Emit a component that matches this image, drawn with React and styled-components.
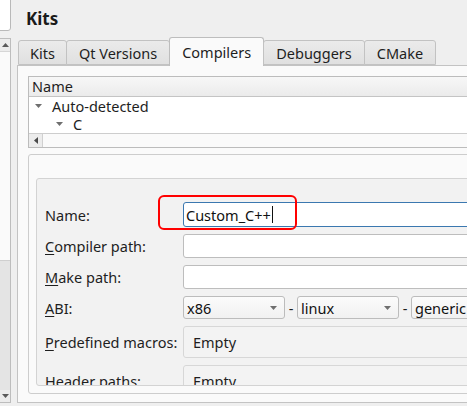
import styled, { createGlobalStyle } from 'styled-components';

const GlobalStyle = createGlobalStyle`
  html, body {
    margin: 0;
    padding: 0;
    background: #efefef;
    overflow: hidden;
  }
  body {
    font-family: "Noto Sans", "DejaVu Sans", sans-serif;
    font-size: 14.5px;
    color: #1e1e1e;
  }
`

const Triangle = ({ dir = 'down', color = '#6f6f6f', size = 7 }) => {
  const pts = {
    down: '0,0 7,0 3.5,4',
    up: '0,4 7,4 3.5,0',
    left: '4,0 4,7 0,3.5',
  }[dir]
  const w = dir === 'left' ? 4 : size
  const h = dir === 'left' ? size : 4
  return (
    <svg width={w} height={h} viewBox={dir === 'left' ? '0 0 4 7' : '0 0 7 4'}>
      <polygon points={pts} fill={color} />
    </svg>
  )
}

const tabs = ['Kits', 'Qt Versions', 'Compilers', 'Debuggers', 'CMake']

function App() {
  return (
    <>
      <GlobalStyle />
      <Window>
        <Sidebar>
          <SearchBox />
          <ListPanel>
            <VScroll>
              <ScrollBtn><Triangle dir="up" color="#5a5a5a" /></ScrollBtn>
              <VHandle />
              <VTrack />
              <ScrollBtn><Triangle dir="down" color="#5a5a5a" /></ScrollBtn>
            </VScroll>
          </ListPanel>
        </Sidebar>

        <Main>
          <Title>Kits</Title>
          <TabBar>
            {tabs.map((t) => (
              <Tab key={t} $active={t === 'Compilers'}>{t}</Tab>
            ))}
          </TabBar>
          <TabPane>
            <Tree>
              <TreeHeader>Name</TreeHeader>
              <TreeRow $depth={0}><Caret><Triangle /></Caret>Auto-detected</TreeRow>
              <TreeRow $depth={1}><Caret><Triangle /></Caret>C</TreeRow>
              <HScroll>
                <HArrow><Triangle dir="left" color="#4a4a4a" /></HArrow>
                <HHandle />
              </HScroll>
            </Tree>

            <Details>
              <FormFrame>
                <Form>
                  <FormRow>
                    <Label>Name:</Label>
                    <LineEdit $focused>
                      Custom_C++<Cursor />
                    </LineEdit>
                    <Highlight />
                  </FormRow>
                  <FormRow>
                    <Label><Mnemonic>C</Mnemonic>ompiler path:</Label>
                    <LineEdit />
                  </FormRow>
                  <FormRow>
                    <Label><Mnemonic>M</Mnemonic>ake path:</Label>
                    <LineEdit />
                  </FormRow>
                  <FormRow>
                    <Label><Mnemonic>A</Mnemonic>BI:</Label>
                    <AbiGroup>
                      <Combo>x86<Triangle /></Combo>
                      <Dash>-</Dash>
                      <Combo>linux<Triangle /></Combo>
                      <Dash>-</Dash>
                      <Combo>generic<Triangle /></Combo>
                    </AbiGroup>
                  </FormRow>
                  <FormRow>
                    <Label><Mnemonic>P</Mnemonic>redefined macros:</Label>
                    <ValueBox>Empty</ValueBox>
                  </FormRow>
                  <FormRow>
                    <Label><Mnemonic>H</Mnemonic>eader paths:</Label>
                    <ValueBox>Empty</ValueBox>
                  </FormRow>
                </Form>
              </FormFrame>
            </Details>
          </TabPane>
        </Main>
      </Window>
    </>
  )
}

const Window = styled.div`
  display: flex;
  width: 540px;
  height: 406px;
  overflow: hidden;
`

const Sidebar = styled.div`
  width: 11px;
  margin-right: 6px;
  display: flex;
  flex-direction: column;
  overflow: hidden;
  flex-shrink: 0;
`

const SearchBox = styled.div`
  box-sizing: border-box;
  margin: -4px 0 0 -30px;
  width: 41px;
  height: 35px;
  background: #ffffff;
  border: 1px solid #b9b9b9;
  border-radius: 3px;
`

const ListPanel = styled.div`
  box-sizing: border-box;
  margin: 7px 0 0 -30px;
  width: 41px;
  height: 365px;
  background: #ffffff;
  border: 1px solid #bdbdbd;
  display: flex;
  justify-content: flex-end;
`

const VScroll = styled.div`
  width: 10px;
  display: flex;
  flex-direction: column;
  background: #e6e6e6;
`

const ScrollBtn = styled.div`
  height: 12px;
  display: flex;
  align-items: center;
  justify-content: center;
  background: #ececec;
`

const VHandle = styled.div`
  height: 208px;
  background: #fafafa;
  border-top: 1px solid #d6d6d6;
  border-bottom: 1px solid #cfcfcf;
`

const VTrack = styled.div`
  flex: 1;
  background: #e4e4e4;
`

const Main = styled.div`
  width: 520px;
  flex-shrink: 0;
  display: flex;
  flex-direction: column;
`

const Title = styled.div`
  height: 38px;
  box-sizing: border-box;
  padding: 7px 0 0 9px;
  line-height: 24px;
  font-size: 17px;
  font-weight: 700;
  color: #1a1a1a;
`

const TabBar = styled.div`
  height: 27px;
  display: flex;
  align-items: flex-end;
  padding-left: 1px;
  position: relative;
  z-index: 1;
`

const Tab = styled.div`
  box-sizing: border-box;
  height: ${(p) => (p.$active ? '29px' : '25px')};
  margin-bottom: ${(p) => (p.$active ? '-1px' : '0')};
  padding: 0 12px;
  margin-left: -1px;
  display: flex;
  align-items: center;
  justify-content: center;
  padding-bottom: ${(p) => (p.$active ? '1px' : '0')};
  border: 1px solid ${(p) => (p.$active ? '#bdbdbd' : '#c2c2c2')};
  border-bottom: ${(p) => (p.$active ? 'none' : '1px solid #c2c2c2')};
  border-radius: 3px 3px 0 0;
  background: ${(p) =>
    p.$active ? '#fafafa' : 'linear-gradient(#ebebeb, #e0e0e0)'};
  color: #1e1e1e;
  white-space: nowrap;
  &:first-child {
    margin-left: 0;
    padding: 0 11px;
  }
`

const TabPane = styled.div`
  box-sizing: border-box;
  height: 338px;
  background: #fafafa;
  border: 1px solid #c3c3c3;
  padding: 10px 0 0 10px;
`

const Tree = styled.div`
  box-sizing: border-box;
  height: 72px;
  background: #ffffff;
  border: 1px solid #bcbcbc;
  display: flex;
  flex-direction: column;
`

const TreeHeader = styled.div`
  box-sizing: border-box;
  height: 20px;
  padding-left: 3px;
  line-height: 19px;
  background: linear-gradient(#f7f7f7, #ebebeb);
  border-bottom: 1px solid #c4c4c4;
`

const TreeRow = styled.div`
  height: 18px;
  line-height: 18px;
  display: flex;
  align-items: center;
  padding-left: ${(p) => 6 + p.$depth * 21}px;
`

const Caret = styled.span`
  width: 17px;
  display: flex;
  align-items: center;
`

const HScroll = styled.div`
  box-sizing: border-box;
  margin-top: auto;
  height: 14px;
  display: flex;
  border-top: 1px solid #cdcdcd;
  background: #e6e6e6;
`

const HArrow = styled.div`
  width: 13px;
  display: flex;
  align-items: center;
  justify-content: center;
  background: #ececec;
  border-right: 1px solid #d0d0d0;
`

const HHandle = styled.div`
  flex: 1;
  background: #fafafa;
`

const Details = styled.div`
  box-sizing: border-box;
  margin-top: 6px;
  height: 240px;
  background: #fafafa;
  border: 1px solid #cdcdcd;
  border-radius: 3px;
  padding: 23px 0 0 7px;
`

const FormFrame = styled.div`
  box-sizing: border-box;
  height: 208px;
  background: #f2f2f2;
  border: 1px solid #d3d3d3;
  border-radius: 3px;
  padding: 23px 0 0 8px;
  overflow: hidden;
`

const Form = styled.div`
  display: flex;
  flex-direction: column;
  gap: 7px;
`

const FormRow = styled.div`
  position: relative;
  display: grid;
  grid-template-columns: 138px 1fr;
  align-items: center;
`

const Label = styled.div`
  white-space: nowrap;
  color: #1e1e1e;
`

const Mnemonic = styled.span`
  text-decoration: underline;
  text-underline-offset: 2px;
`

const LineEdit = styled.div`
  box-sizing: border-box;
  height: ${(p) => (p.$focused ? '25px' : '24px')};
  background: #ffffff;
  border: 1px solid ${(p) => (p.$focused ? '#3b78b0' : '#bdbdbd')};
  border-radius: 3px;
  padding-left: 2px;
  display: flex;
  align-items: center;
  color: #111;
`

const Cursor = styled.span`
  display: inline-block;
  width: 1px;
  height: 17px;
  background: #111;
  margin-left: 1px;
`

const Highlight = styled.div`
  position: absolute;
  left: 113px;
  top: -7px;
  width: 139px;
  height: 35px;
  box-sizing: border-box;
  border: 2px solid #ff0000;
  border-radius: 6px;
  pointer-events: none;
`

const AbiGroup = styled.div`
  display: flex;
  align-items: center;
  gap: 3px;
`

const Combo = styled.div`
  box-sizing: border-box;
  width: 102px;
  height: 23px;
  flex-shrink: 0;
  padding: 0 7px 0 3px;
  display: flex;
  align-items: center;
  justify-content: space-between;
  background: linear-gradient(#fbfbfb, #f1f1f1);
  border: 1px solid #bcbcbc;
  border-radius: 3px;
  color: #111;
`

const Dash = styled.span`
  width: 6px;
  text-align: center;
`

const ValueBox = styled.div`
  box-sizing: border-box;
  height: 32px;
  background: #f3f3f3;
  border: 1px solid #d7d7d7;
  border-radius: 3px;
  padding-left: 9px;
  display: flex;
  align-items: center;
  color: #1e1e1e;
`

export default App
